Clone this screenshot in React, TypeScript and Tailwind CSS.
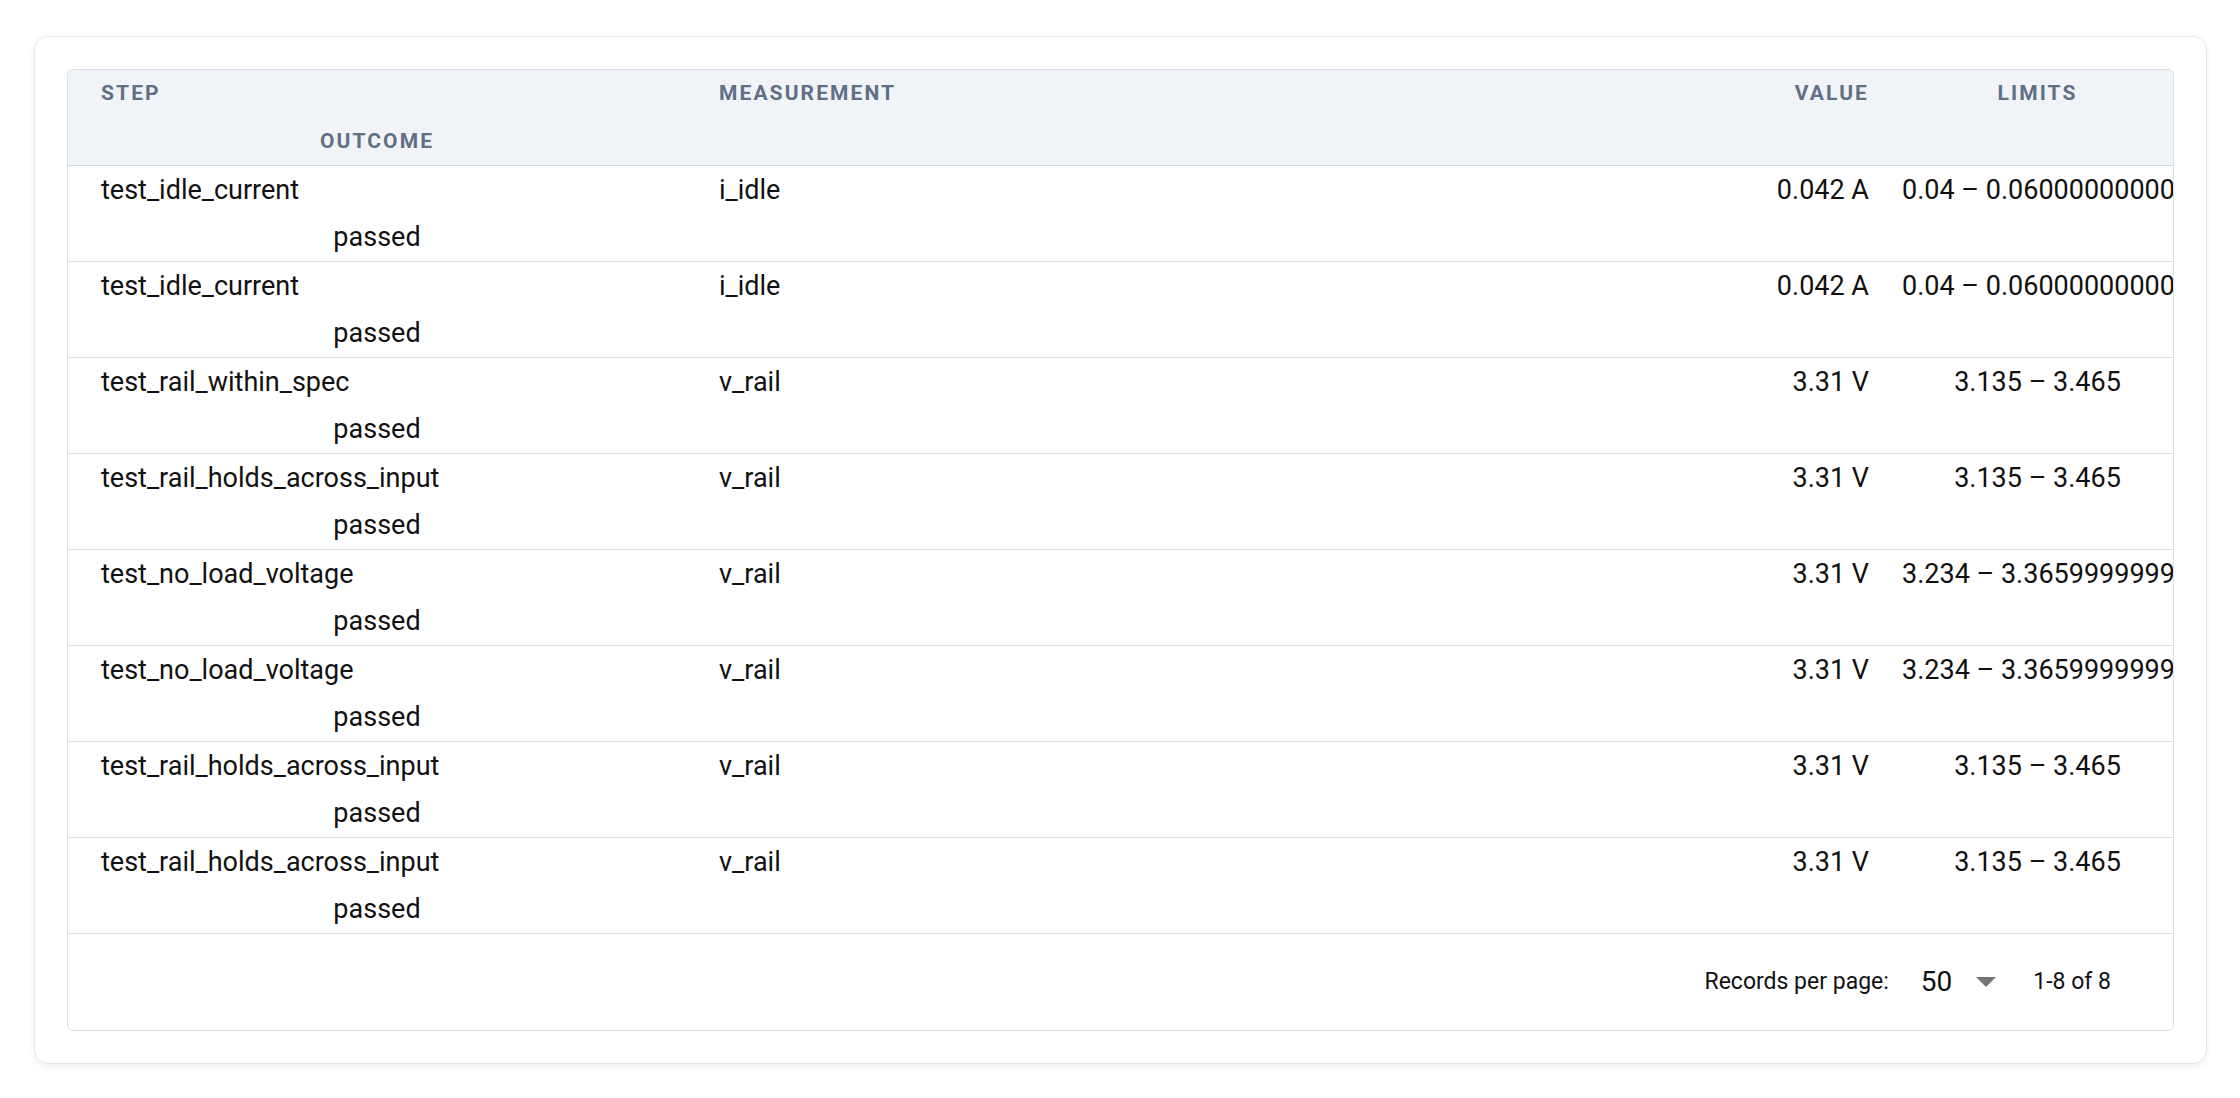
import React from 'react';

const rows = [
  ['test_idle_current', 'i_idle', '0.042 A', '0.04 – 0.060000000000000005'],
  ['test_idle_current', 'i_idle', '0.042 A', '0.04 – 0.060000000000000005'],
  ['test_rail_within_spec', 'v_rail', '3.31 V', '3.135 – 3.465'],
  ['test_rail_holds_across_input', 'v_rail', '3.31 V', '3.135 – 3.465'],
  ['test_no_load_voltage', 'v_rail', '3.31 V', '3.234 – 3.3659999999999997'],
  ['test_no_load_voltage', 'v_rail', '3.31 V', '3.234 – 3.3659999999999997'],
  ['test_rail_holds_across_input', 'v_rail', '3.31 V', '3.135 – 3.465'],
  ['test_rail_holds_across_input', 'v_rail', '3.31 V', '3.135 – 3.465'],
];

export default function App() {
  return (
    <div className="min-h-screen bg-white pt-[36px] pl-[34px] pr-[33px] font-[Roboto] text-[#111]">
      <div className="rounded-[14px] border border-[#e3e8f0] shadow-[0_2px_6px_rgba(30,50,90,0.08)] p-[32px]">
        <div className="rounded-[6px] border border-[#dcdfe3] overflow-hidden">
          {/* Header */}
          <div className="grid grid-cols-[618px_584px_632px_1fr] items-center h-[96px] bg-[#f0f4f8] border-b border-[#d4d8dd] text-[21px] font-bold tracking-[0.1em] text-[#5f6f86] whitespace-nowrap">
            <div className="pl-[33px]">STEP</div>
            <div className="pl-[33px]">MEASUREMENT</div>
            <div className="pr-[33px] text-right">VALUE</div>
            <div className="text-center">LIMITS</div>
            <div className="text-center">OUTCOME</div>
          </div>
          {rows.map((r, i) => (
            <div key={i} className="grid grid-cols-[618px_584px_632px_1fr] items-center h-[96px] border-b border-[#dcdfe3] text-[27px] whitespace-nowrap">
              <div className="pl-[33px]">{r[0]}</div>
              <div className="pl-[33px]">{r[1]}</div>
              <div className="pr-[33px] text-right">{r[2]}</div>
              <div className="text-center">{r[3]}</div>
              <div className="text-center">passed</div>
            </div>
          ))}
          {/* Footer */}
          <div className="h-[96px] flex items-center justify-end pr-[62px] text-[23px] whitespace-nowrap">
            <span>Records per page:</span>
            <span className="ml-[32px] text-[28px]">50</span>
            <svg className="ml-[24px]" width="20" height="10" viewBox="0 0 20 10">
              <path d="M0 0 L20 0 L10 10 Z" fill="#757575" />
            </svg>
            <span className="ml-[37px]">1-8 of 8</span>
          </div>
        </div>
      </div>
    </div>
  );
}
